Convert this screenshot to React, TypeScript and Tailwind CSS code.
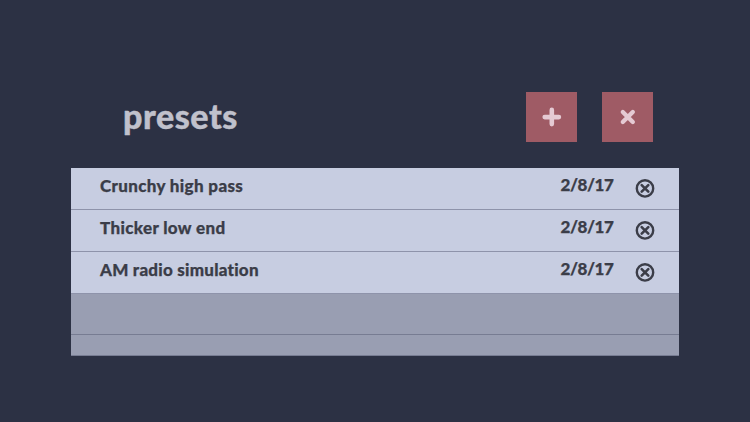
import React from "react";

const presets = [
  { name: "Crunchy high pass", date: "2/8/17", spacing: "tracking-[0.34px]" },
  { name: "Thicker low end", date: "2/8/17", spacing: "tracking-[0.34px]" },
  { name: "AM radio simulation", date: "2/8/17", spacing: "tracking-[0.24px]" },
];

function PlusIcon() {
  return (
    <svg width="20" height="20" viewBox="0 0 20 20" fill="none" stroke="#e5cad3" strokeWidth="4.6" strokeLinecap="round">
      <path d="M9.8 2.9v14.2M2.7 10.1h14.2" />
    </svg>
  );
}

function CrossIcon() {
  return (
    <svg width="20" height="20" viewBox="0 0 20 20" fill="none" stroke="#e5cad3" strokeWidth="4.3" strokeLinecap="round">
      <path d="M4.8 5l10 10M14.8 5l-10 10" />
    </svg>
  );
}

function RemoveIcon() {
  return (
    <svg width="20" height="20" viewBox="0 0 20 20" fill="none" stroke="#3b3d48" strokeLinecap="round">
      <circle cx="10" cy="10.4" r="8.2" strokeWidth="2.4" />
      <path d="M6.7 7.1l6.6 6.6M13.3 7.1l-6.6 6.6" strokeWidth="2.6" />
    </svg>
  );
}

export default function App() {
  return (
    <main className="h-[422px] w-[750px] overflow-hidden bg-[#2c3144] px-[71px] pt-[92px] font-['Lato',sans-serif]">
      <header className="flex h-[76px] items-start pl-[52px]">
        <h1 className="mt-[2px] flex-1 text-[34px] leading-[44px] font-black tracking-[0.55px] text-[#c0c1cc] [-webkit-text-stroke:0.4px_#c0c1cc]">
          presets
        </h1>
        <div className="flex gap-[25px] pr-[26px]">
          <button aria-label="Add preset" className="flex h-[50px] w-[51px] items-center justify-center bg-[#9f5b65]">
            <PlusIcon />
          </button>
          <button aria-label="Close presets" className="flex h-[50px] w-[51px] items-center justify-center bg-[#9f5b65]">
            <CrossIcon />
          </button>
        </div>
      </header>
      <section className="h-[188px] border-b border-[#777c92] bg-[#999eb2]">
        <ul>
          {presets.map((p) => (
            <li
              key={p.name}
              className="flex h-[42px] items-start border-b border-[#8e93aa] bg-[#c7cde1] pr-[24.5px] pl-[29px] text-[#3b3d48] [-webkit-text-stroke:0.25px_#3b3d48] nth-3:h-[41.5px]"
            >
              <span className={"mt-[6px] flex-1 text-[17px] leading-[24px] font-black " + p.spacing}>{p.name}</span>
              <span className="mt-[5px] w-[74px] text-[17px] leading-[24px] font-black tracking-[-0.45px]">{p.date}</span>
              <button aria-label="Delete preset" className="mt-[10px]">
                <RemoveIcon />
              </button>
            </li>
          ))}
        </ul>
        <div className="h-[41.5px] border-b border-[#777c92]" />
      </section>
    </main>
  );
}
